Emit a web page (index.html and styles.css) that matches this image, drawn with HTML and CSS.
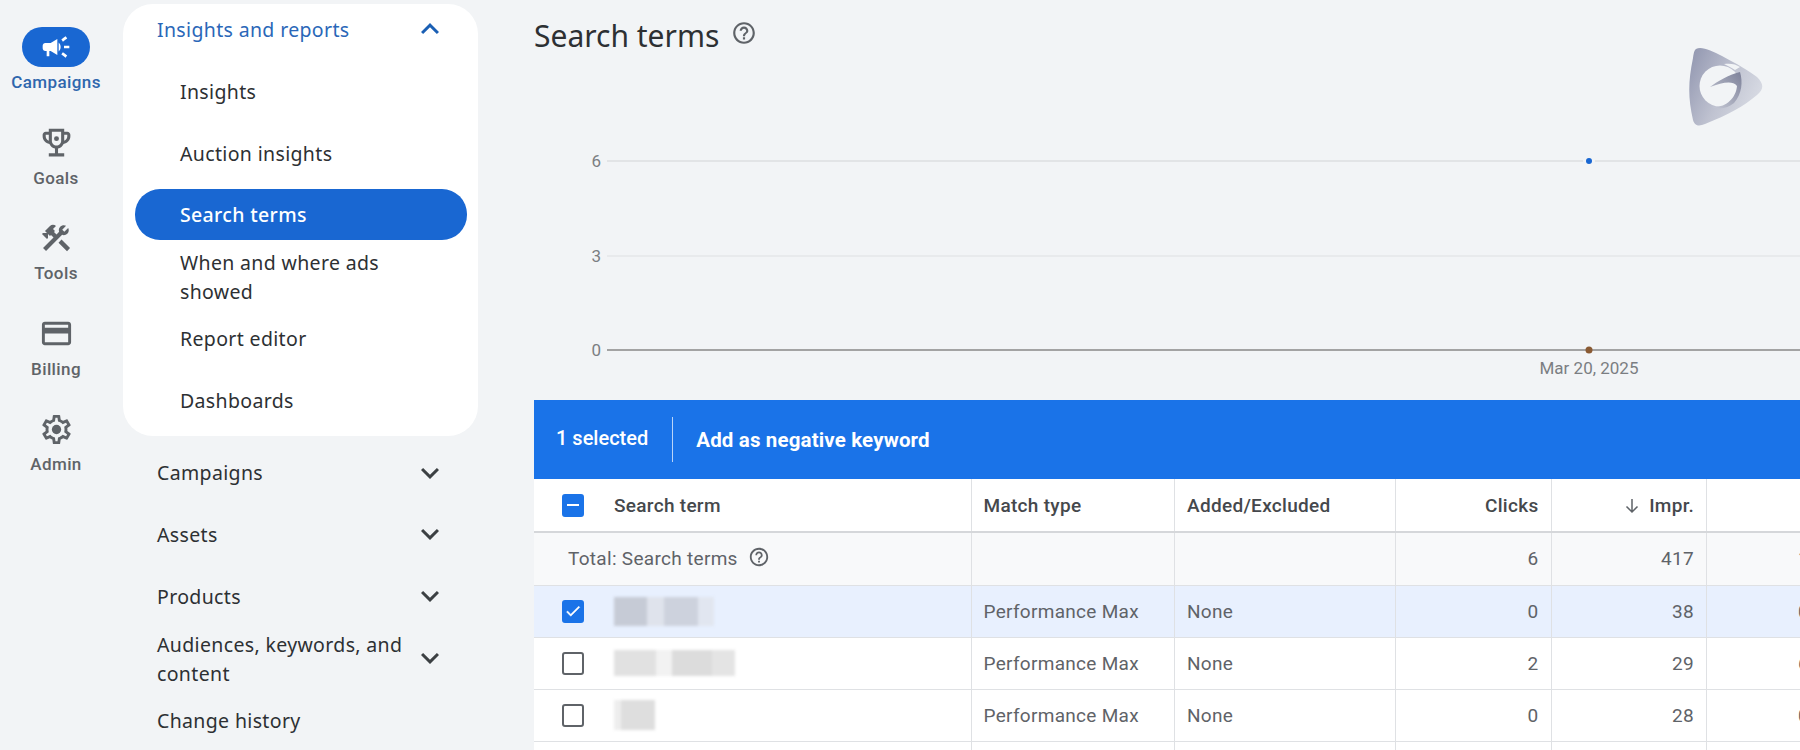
FILE: index.html
```html
<!DOCTYPE html>
<html lang="en">

<head>
    <meta charset="utf-8" />
    <title>Search terms</title>
    <link rel="stylesheet" href="styles.css">
</head>

<body>
    <svg class="defs" width="0" height="0">
        <symbol id="i-help" viewBox="0 0 24 24"><path d="M11 18h2v-2h-2v2zm1-16C6.48 2 2 6.48 2 12s4.48 10 10 10 10-4.48 10-10S17.52 2 12 2zm0 18c-4.41 0-8-3.59-8-8s3.59-8 8-8 8 3.59 8 8-3.59 8-8 8zm0-14c-2.21 0-4 1.79-4 4h2c0-1.1.9-2 2-2s2 .9 2 2c0 2-3 1.75-3 5h2c0-2.25 3-2.5 3-5 0-2.21-1.79-4-4-4z"/></symbol>
        <symbol id="i-down" viewBox="0 0 24 24"><path d="M7.41 8.59 12 13.17l4.59-4.58L18 10l-6 6-6-6z"/></symbol>
        <symbol id="i-up" viewBox="0 0 24 24"><path d="M7.41 15.41 12 10.83l4.59 4.58L18 14l-6-6-6 6z"/></symbol>
    </svg>

    <div class="rail">
        <div class="rail-item active">
            <div class="rail-icon">
                <svg viewBox="0 0 24 24" width="32" height="32"><path d="M18 11v2h4v-2h-4zm-2 6.61c.96.71 2.21 1.65 3.2 2.39.4-.53.8-1.07 1.2-1.6-.99-.74-2.24-1.68-3.2-2.4-.4.54-.8 1.08-1.2 1.61zM20.4 5.6c-.4-.53-.8-1.07-1.2-1.6-.99.74-2.24 1.68-3.2 2.4.4.53.8 1.07 1.2 1.6.96-.72 2.21-1.65 3.2-2.4zM4 9c-1.1 0-2 .9-2 2v2c0 1.1.9 2 2 2h1v4h2v-4h1l5 3V6L8 9H4zm11.5 3c0-1.33-.58-2.53-1.5-3.35v6.69c.92-.81 1.5-2.01 1.5-3.34z"/></svg>
            </div>
            <span>Campaigns</span>
        </div>
        <div class="rail-item">
            <div class="rail-icon">
                <svg viewBox="0 0 24 24" width="37" height="37"><path d="M19 5h-2V3H7v2H5c-1.1 0-2 .9-2 2v1c0 2.55 1.92 4.63 4.39 4.94.63 1.5 1.98 2.63 3.61 2.96V19H7v2h10v-2h-4v-3.1c1.63-.33 2.98-1.46 3.61-2.96C19.08 12.63 21 10.55 21 8V7c0-1.1-.9-2-2-2zM5 8V7h2v3.82C5.84 10.4 5 9.3 5 8zm7 6c-1.65 0-3-1.35-3-3V5h6v6c0 1.65-1.35 3-3 3zm7-6c0 1.3-.84 2.4-2 2.82V7h2v1z"/><circle cx="12" cy="9.5" r="1.6"/></svg>
            </div>
            <span>Goals</span>
        </div>
        <div class="rail-item">
            <div class="rail-icon">
                <svg viewBox="0 0 24 24" width="34" height="34"><path d="M13.78 15.3l6 6 2.11-2.16-6-6zM17.5 10c1.93 0 3.5-1.57 3.5-3.5 0-.58-.16-1.12-.41-1.6l-2.7 2.7-1.49-1.49 2.7-2.7c-.48-.25-1.02-.41-1.6-.41C15.57 3 14 4.57 14 6.5c0 .41.08.8.21 1.16l-1.85 1.85-1.78-1.78.71-.71-1.41-1.41L12 3.49c-1.17-1.17-3.07-1.17-4.24 0L4.22 7.03l1.41 1.41H2.81l-.71.71 3.54 3.54.71-.71V9.15l1.41 1.41.71-.71 1.78 1.78-7.41 7.41 2.12 2.12L16.34 9.79c.36.13.75.21 1.16.21z"/></svg>
            </div>
            <span>Tools</span>
        </div>
        <div class="rail-item">
            <div class="rail-icon">
                <svg viewBox="0 0 24 24" width="35" height="35"><path d="M20 4H4c-1.11 0-1.99.89-1.99 2L2 18c0 1.11.89 2 2 2h16c1.11 0 2-.89 2-2V6c0-1.11-.89-2-2-2zm0 14H4v-6h16v6zm0-10H4V6h16v2z"/></svg>
            </div>
            <span>Billing</span>
        </div>
        <div class="rail-item">
            <div class="rail-icon">
                <svg viewBox="0 0 24 24" width="35" height="35"><path d="M19.43 12.98c.04-.32.07-.64.07-.98 0-.34-.03-.66-.07-.98l2.11-1.65c.19-.15.24-.42.12-.64l-2-3.46c-.09-.16-.26-.25-.44-.25-.06 0-.12.01-.17.03l-2.49 1c-.52-.4-1.08-.73-1.69-.98l-.38-2.65C14.46 2.18 14.25 2 14 2h-4c-.25 0-.46.18-.49.42l-.38 2.65c-.61.25-1.17.59-1.69.98l-2.49-1c-.06-.02-.12-.03-.18-.03-.17 0-.34.09-.43.25l-2 3.46c-.13.22-.07.49.12.64l2.11 1.65c-.04.32-.07.65-.07.98 0 .33.03.66.07.98l-2.11 1.65c-.19.15-.24.42-.12.64l2 3.46c.09.16.26.25.44.25.06 0 .12-.01.17-.03l2.49-1c.52.4 1.08.73 1.69.98l.38 2.65c.03.24.24.42.49.42h4c.25 0 .46-.18.49-.42l.38-2.65c.61-.25 1.17-.59 1.69-.98l2.49 1c.06.02.12.03.18.03.17 0 .34-.09.43-.25l2-3.46c.12-.22.07-.49-.12-.64l-2.11-1.65zm-1.98-1.71c.04.31.05.52.05.73 0 .21-.02.43-.05.73l-.14 1.13.89.7 1.08.84-.7 1.21-1.27-.51-1.04-.42-.9.68c-.43.32-.84.56-1.25.73l-1.06.43-.16 1.13-.2 1.35h-1.4l-.19-1.35-.16-1.13-1.06-.43c-.43-.18-.83-.41-1.23-.71l-.91-.7-1.06.43-1.27.51-.7-1.21 1.08-.84.89-.7-.14-1.13c-.03-.31-.05-.54-.05-.74s.02-.43.05-.73l.14-1.13-.89-.7-1.08-.84.7-1.21 1.27.51 1.04.42.9-.68c.43-.32.84-.56 1.25-.73l1.06-.43.16-1.13.2-1.35h1.39l.19 1.35.16 1.13 1.06.43c.43.18.83.41 1.23.71l.91.7 1.06-.43 1.27-.51.7 1.21-1.07.85-.89.7.14 1.13z"/><circle cx="12" cy="12" r="3.2"/></svg>
            </div>
            <span>Admin</span>
        </div>
    </div>

    <div class="sidenav">
        <div class="nav-card">
            <div class="nav-row open">
                <span>Insights and reports</span>
                <svg class="chev"><use href="#i-up"></use></svg>
            </div>
            <div class="nav-sub">Insights</div>
            <div class="nav-sub">Auction insights</div>
            <div class="nav-sub current">Search terms</div>
            <div class="nav-sub short">When and where ads<br>showed</div>
            <div class="nav-sub">Report editor</div>
            <div class="nav-sub">Dashboards</div>
        </div>
        <div class="nav-row short"><span>Campaigns</span><svg class="chev"><use href="#i-down"></use></svg></div>
        <div class="nav-row"><span>Assets</span><svg class="chev"><use href="#i-down"></use></svg></div>
        <div class="nav-row"><span>Products</span><svg class="chev"><use href="#i-down"></use></svg></div>
        <div class="nav-row wrap"><span>Audiences, keywords, and<br>content</span><svg class="chev"><use href="#i-down"></use></svg></div>
        <div class="nav-row"><span>Change history</span></div>
    </div>

    <div class="main">
        <div class="title-row">
            <h1>Search terms</h1>
            <svg class="help-big"><use href="#i-help"></use></svg>
        </div>

        <!-- chart -->
        <svg class="chart" width="1266" height="330">
            <line x1="73" y1="91" x2="1266" y2="91" class="grid" />
            <line x1="73" y1="186" x2="1266" y2="186" class="grid thin" />
            <line x1="73" y1="280" x2="1266" y2="280" class="axis" />
            <text x="67" y="97" class="tick" text-anchor="end">6</text>
            <text x="67" y="192" class="tick" text-anchor="end">3</text>
            <text x="67" y="286" class="tick" text-anchor="end">0</text>
            <circle cx="1055" cy="91" r="6" fill="#f2f4f6" />
            <circle cx="1055" cy="91" r="3" fill="#1967d2" />
            <circle cx="1055" cy="280" r="3.5" fill="#8a5a33" />
            <text x="1055" y="304" class="tick" text-anchor="middle">Mar 20, 2025</text>
        </svg>

        <div class="action-bar">
            <span class="sel-count">1 selected</span>
            <span class="bar-sep"></span>
            <span class="bar-action">Add as negative keyword</span>
        </div>

        <table class="terms">
            <colgroup>
                <col class="c-term"><col class="c-match"><col class="c-added"><col class="c-num"><col class="c-num"><col class="c-num">
            </colgroup>
            <thead>
                <tr>
                    <th><div class="term-cell"><span class="box on dash"></span>Search term</div></th>
                    <th>Match type</th>
                    <th>Added/Excluded</th>
                    <th class="num">Clicks</th>
                    <th class="num"><svg class="arrow" viewBox="0 0 18 18" width="18" height="18"><path d="M9 2v13M3.5 9.5 9 15l5.5-5.5"/></svg> Impr.</th>
                    <th class="num"></th>
                </tr>
            </thead>
            <tbody>
                <tr class="total">
                    <td><div class="total-cell">Total: Search terms <svg class="help-small"><use href="#i-help"></use></svg></div></td>
                    <td></td>
                    <td></td>
                    <td class="num">6</td>
                    <td class="num">417</td>
                    <td class="cut">1.44%</td>
                </tr>
                <tr class="picked">
                    <td><div class="term-cell"><span class="box on tick-box">
                        <svg viewBox="0 0 24 24" width="22" height="22"><path d="M9 16.2 4.8 12l-1.4 1.4L9 19 21 7l-1.4-1.4z" fill="#fff" stroke="#fff" stroke-width=".6"/></svg>
                    </span><div class="smudge s1"><i></i><i></i><i></i><i></i></div></div></td>
                    <td>Performance Max</td>
                    <td>None</td>
                    <td class="num">0</td>
                    <td class="num">38</td>
                    <td class="cut">0.00%</td>
                </tr>
                <tr>
                    <td><div class="term-cell"><span class="box"></span><div class="smudge s2"><i></i><i></i><i></i><i></i></div></div></td>
                    <td>Performance Max</td>
                    <td>None</td>
                    <td class="num">2</td>
                    <td class="num">29</td>
                    <td class="cut">6.90%</td>
                </tr>
                <tr>
                    <td><div class="term-cell"><span class="box"></span><div class="smudge s3"><i></i><i></i></div></div></td>
                    <td>Performance Max</td>
                    <td>None</td>
                    <td class="num">0</td>
                    <td class="num">28</td>
                    <td class="cut">0.00%</td>
                </tr>
                <tr>
                    <td></td><td></td><td></td><td></td><td></td><td></td>
                </tr>
            </tbody>
        </table>
    </div>

    <!-- watermark -->
    <svg class="watermark" viewBox="0 0 160 120" width="160" height="120">
        <defs>
            <linearGradient id="wm-a" x1="0" y1="0" x2="1" y2="0.5">
                <stop offset="0" stop-color="#8f94ae" />
                <stop offset="0.6" stop-color="#c0c3d1" />
                <stop offset="1" stop-color="#d6d9e2" />
            </linearGradient>
            <linearGradient id="wm-b" x1="1" y1="0" x2="0" y2="1">
                <stop offset="0" stop-color="#7d8199" />
                <stop offset="1" stop-color="#c9ccd8" />
            </linearGradient>
        </defs>
        <path d="M60 28C54 28 54 32 53 38 48 62 48 78 53 100 55 107 60 106 65 104 88 95 104 86 117 75 124 69 124 64 117 57 108 50 97 44 82 36 74 32 66 28 60 28Z" fill="url(#wm-a)" />
        <circle cx="80" cy="66" r="20.5" fill="#f2f4f6" />
        <path d="M84 44C90 43 96 44 100 47L95 50C92 48 88 46 84 44Z" fill="#f2f4f6" />
        <path d="M70 67C78 61 88 55 100 52 103 62 102 74 94 83 88 88 80 90 72 87 86 88 96 78 97 66 92 60 82 63 70 67Z" fill="url(#wm-b)" />
    </svg>
</body>
</html>
```

FILE: styles.css
```css
* {
    box-sizing: border-box;
}

html,
body {
    margin: 0;
    height: 750px;
    overflow: hidden;
}

body {
    display: flex;
    background-color: #f2f4f6;
    font-family: "Roboto", "Liberation Sans", sans-serif;
    color: #3c4043;
}

.defs {
    position: absolute;
}

/* left rail */
.rail {
    flex: none;
    width: 112px;
    padding-top: 27px;
    display: flex;
    flex-direction: column;
    align-items: center;
}

.rail-item {
    height: 95.5px;
    display: flex;
    flex-direction: column;
    align-items: center;
    font-size: 17px;
    font-weight: 500;
    letter-spacing: .4px;
    color: #5f6368;
}

.rail-icon {
    width: 68px;
    height: 40px;
    margin-bottom: 5px;
    display: flex;
    align-items: center;
    justify-content: center;
    border-radius: 20px;
}

.rail-icon svg {
    fill: #5f6368;
}

.rail-item.active {
    color: #2f66ad;
}

.rail-item.active .rail-icon {
    background-color: #1967d2;
}

.rail-item.active .rail-icon svg {
    fill: #fff;
}

/* second nav */
.sidenav {
    flex: none;
    width: 422px;
    padding: 4px 56px 0 11px;
    display: flex;
    flex-direction: column;
    gap: 12px;
    font-family: "Noto Sans", "Liberation Sans", sans-serif;
    font-size: 19.5px;
    letter-spacing: .35px;
    line-height: 29px;
    color: #2d3033;
}

.nav-card {
    background-color: #fff;
    border-radius: 30px;
    padding-bottom: 11px;
    display: flex;
    flex-direction: column;
    gap: 12px;
}

.nav-row {
    height: 50px;
    flex: none;
    padding: 0 30px 0 34px;
    display: flex;
    align-items: center;
    justify-content: space-between;
}

.nav-row.short {
    height: 49px;
}

.nav-row.wrap span {
    padding-top: 2px;
}

.nav-row.open {
    color: #2a67b8;
}

.nav-row.open .chev {
    fill: #1a5fb4;
}

.chev {
    width: 36px;
    height: 36px;
    fill: #3c4043;
    flex: none;
}

.nav-sub {
    height: 50px;
    margin: 0 11px 0 12px;
    padding-left: 45px;
    display: flex;
    align-items: center;
    border-radius: 25px;
}

.nav-sub.short {
    height: 49px;
}

.nav-sub.current {
    height: 51px;
    margin-top: -1px;
    background-color: #1967d2;
    color: #fff;
    font-weight: 500;
}

/* main area */
.main {
    flex: none;
    width: 1266px;
    height: 750px;
    overflow: hidden;
}

.title-row {
    height: 70px;
    display: flex;
    align-items: center;
    gap: 12px;
}

h1 {
    margin: 0;
    font-family: "Noto Sans", "Liberation Sans", sans-serif;
    font-size: 30px;
    font-weight: 400;
    color: #2d3033;
}

.help-big {
    width: 26px;
    height: 26px;
    fill: #5f6368;
    margin-top: -4px;
}

.chart {
    display: block;
}

.grid {
    stroke: #e2e4e6;
    stroke-width: 2;
}

.grid.thin {
    stroke: #e8eaec;
}

.axis {
    stroke: #a3a3a3;
    stroke-width: 2;
}

.tick {
    font-size: 17px;
    fill: #7b7e82;
}

.action-bar {
    height: 79px;
    padding-left: 22px;
    display: flex;
    align-items: center;
    background-color: #1a73e8;
    color: #fff;
    font-size: 20px;
}

.sel-count {
    font-weight: 500;
    margin-top: -4px;
}

.bar-sep {
    width: 1px;
    height: 45px;
    margin: 0 23px 0 24px;
    background-color: #b9d4f8;
}

.bar-action {
    font-size: 20.5px;
    font-weight: 700;
    letter-spacing: .15px;
}

.terms {
    width: 1328px;
    table-layout: fixed;
    border-collapse: collapse;
    background-color: #fff;
    font-size: 19px;
    letter-spacing: .3px;
    color: #5f6368;
}

.c-term {
    width: 437px;
}

.c-match {
    width: 203.5px;
}

.c-added {
    width: 221px;
}

.c-num {
    width: 155.5px;
}

th,
td {
    height: 52px;
    padding: 0 12px;
    text-align: left;
    font-weight: 400;
    border-right: 1px solid #dfe1e4;
    border-bottom: 1px solid #dfe1e4;
}

th {
    height: 53px;
    color: #45484c;
    font-weight: 500;
    border-bottom: 2px solid #d5d7da;
}

.total td {
    height: 53px;
    background-color: #f8f9fa;
}

.picked td {
    background-color: #e8f0fe;
}

th.num,
td.num {
    text-align: right;
}

td.cut {
    padding-left: 91px;
    white-space: nowrap;
    overflow: hidden;
}

.arrow {
    margin: 0 3px -3px 0;
    fill: none;
    stroke: #5f6368;
    stroke-width: 1.5;
}

.term-cell {
    display: flex;
    align-items: center;
    padding-left: 16px;
    gap: 30px;
}

.total-cell {
    display: flex;
    align-items: center;
    gap: 10px;
    padding-left: 22px;
}

.help-small {
    width: 22px;
    height: 22px;
    fill: #5f6368;
    margin-top: -4px;
}

.box {
    width: 22px;
    height: 23px;
    flex: none;
    border: 2px solid #5f6368;
    border-radius: 3px;
    display: flex;
    align-items: center;
    justify-content: center;
}

.box.on {
    background-color: #1a73e8;
    border-color: #1a73e8;
}

.box.dash::before {
    content: "";
    width: 12px;
    height: 2.5px;
    background-color: #fff;
}

/* blurred out search terms */
.smudge {
    display: flex;
    filter: blur(1.5px);
}

.smudge i {
    display: block;
    height: 100%;
}

.s1 {
    width: 100px;
    height: 29px;
}

.s1 i:nth-child(1) {
    width: 33px;
    background-color: #c6cbd6;
}

.s1 i:nth-child(2) {
    width: 17px;
    background-color: #dfe3ec;
}

.s1 i:nth-child(3) {
    width: 34px;
    background-color: #cdd2dd;
}

.s1 i:nth-child(4) {
    width: 16px;
    background-color: #e1e6f0;
}

.s2 {
    width: 121px;
    height: 26px;
}

.s2 i:nth-child(1) {
    width: 42px;
    background-color: #e1e1e1;
}

.s2 i:nth-child(2) {
    width: 16px;
    background-color: #f2f2f2;
}

.s2 i:nth-child(3) {
    width: 40px;
    background-color: #dcdcdc;
}

.s2 i:nth-child(4) {
    width: 23px;
    background-color: #e4e4e4;
}

.s3 {
    width: 41px;
    height: 30px;
}

.s3 i:nth-child(1) {
    width: 7px;
    background-color: #eeeeee;
}

.s3 i:nth-child(2) {
    width: 34px;
    background-color: #dedede;
}

.watermark {
    position: absolute;
    left: 1640px;
    top: 20px;
}
```
